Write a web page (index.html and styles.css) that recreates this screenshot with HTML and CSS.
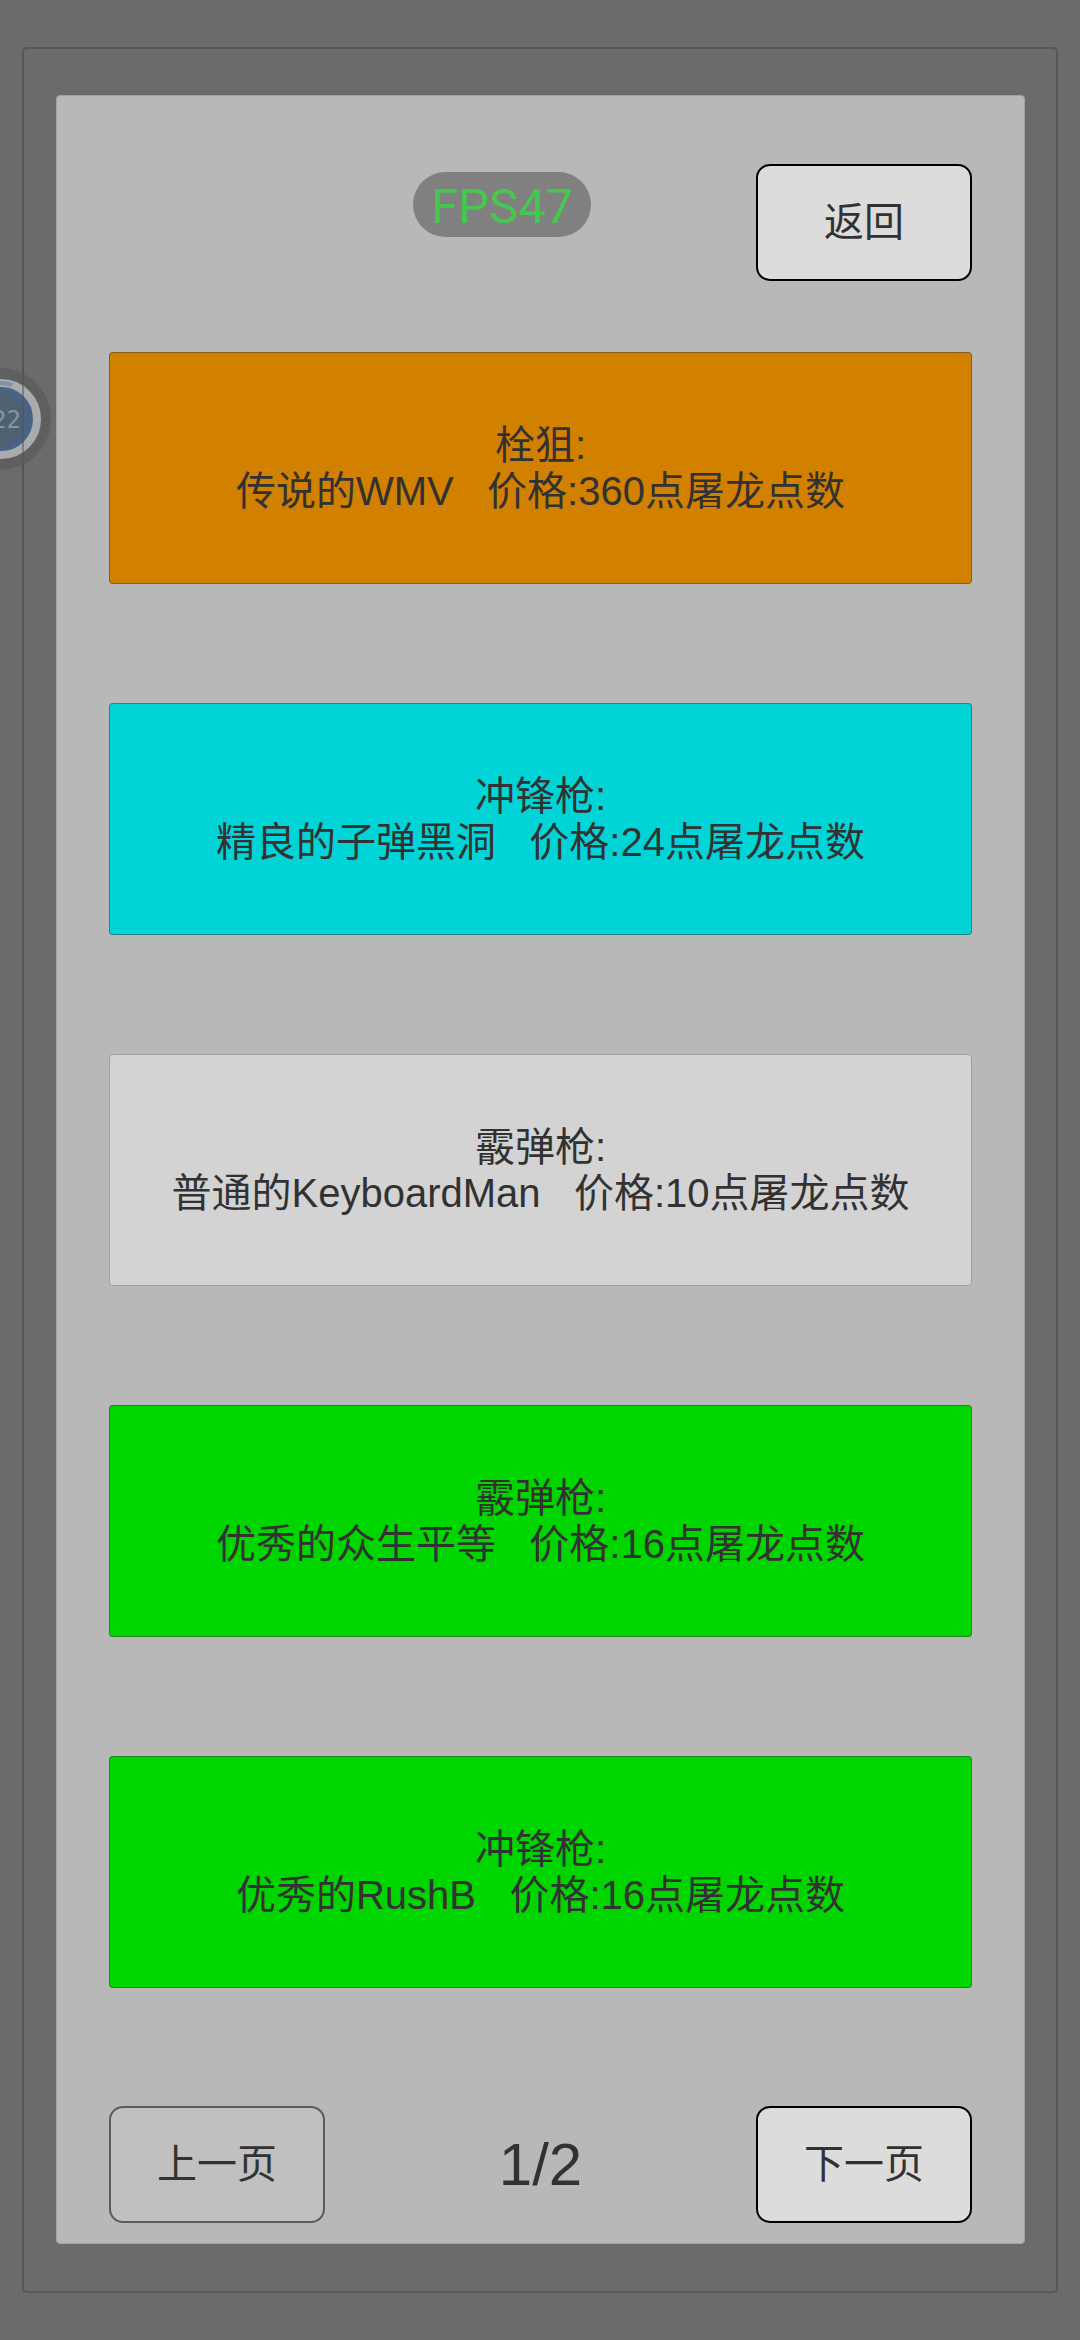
FILE: index.html
```html
<!DOCTYPE html>
<html lang="zh-CN">
<head>
<meta charset="utf-8">
<meta name="viewport" content="width=device-width, initial-scale=1">
<title>商店</title>
<link rel="stylesheet" href="styles.css">
</head>
<body>
<div class="frame">
  <main class="panel">
    <header class="top">
      <button class="btn" type="button">返回</button>
    </header>
    <div class="goods">
      <button class="card legend" type="button">栓狙:<br>传说的WMV&nbsp;&nbsp; 价格:360点屠龙点数</button>
      <button class="card fine" type="button">冲锋枪:<br>精良的子弹黑洞&nbsp;&nbsp; 价格:24点屠龙点数</button>
      <button class="card common" type="button">霰弹枪:<br>普通的KeyboardMan&nbsp;&nbsp; 价格:10点屠龙点数</button>
      <button class="card good" type="button">霰弹枪:<br>优秀的众生平等&nbsp;&nbsp; 价格:16点屠龙点数</button>
      <button class="card good" type="button">冲锋枪:<br>优秀的RushB&nbsp;&nbsp; 价格:16点屠龙点数</button>
    </div>
    <footer class="pager">
      <button class="btn" type="button" disabled>上一页</button>
      <span class="page">1/2</span>
      <button class="btn" type="button">下一页</button>
    </footer>
  </main>
</div>
<div class="fps">FPS47</div>
<div class="bubble">
  <svg width="52" height="104" viewBox="0 0 52 104" aria-hidden="true">
    <circle cx="0" cy="52" r="51" fill="#5f5f5f"/>
    <circle cx="1" cy="52" r="36" fill="#486383" stroke="#a9abad" stroke-width="8"/>
    <path d="M0 25h6l16 14v28l-16 14H0z" fill="#4f6070"/>
    <path d="M0 16a36 36 0 0 1 12 2" fill="none" stroke="#7f93a8" stroke-width="4"/>
    <path d="M23 0v104" stroke="#505050" stroke-opacity=".5" stroke-width="2"/>
  </svg>
  <span class="count">22</span>
</div>
</body>
</html>
```
FILE: styles.css
```css
* {
  box-sizing: border-box;
}

body {
  margin: 0;
  min-height: 100vh;
  padding: 47px 22px;
  background: #6b6b6b;
  color: #323232;
  font-family: "Liberation Sans", "Noto Sans CJK SC", sans-serif;
  font-size: 40px;
  line-height: 46px;
}

.frame {
  padding: 46px 31px 47px 32px;
  border: 2px solid #575757;
  border-radius: 5px;
}

.panel {
  padding: 68px 52px 20px;
  border: 1px solid #a3a3a3;
  border-radius: 4px;
  background: #b8b8b8;
}

.top {
  display: flex;
  justify-content: flex-end;
}

.btn {
  width: 216px;
  height: 117px;
  padding: 0 0 2px;
  border: 2px solid #000;
  border-radius: 14px;
  background: #dcdcdc;
  color: inherit;
  font: inherit;
}

.btn:disabled {
  border-color: #5c5c5c;
  background: #c0c0c0;
}

.goods {
  display: grid;
  gap: 119px;
  padding: 71px 0 118px;
}

.card {
  width: 100%;
  height: 232px;
  padding: 0;
  border: 1px solid rgb(60 60 60 / 50%);
  border-radius: 4px;
  color: inherit;
  font: inherit;
}

.legend {
  background: #d28000;
}

.fine {
  background: #00d4d6;
}

.common {
  border-color: #a0a0a0;
  background: #d3d3d3;
}

.good {
  background: #00d500;
}

.pager {
  display: flex;
  align-items: center;
  justify-content: space-between;
}

.page {
  font-size: 60px;
}

/* Overlays floating above the game screen */
.fps {
  position: absolute;
  top: 172px;
  left: 413px;
  width: 178px;
  padding-top: 5px;
  border-radius: 33px;
  background: #808080;
  color: #46c850;
  font-family: Roboto, sans-serif;
  font-size: 49px;
  line-height: 60px;
  text-align: center;
}

.bubble {
  position: absolute;
  top: 367px;
  left: 0;
  width: 52px;
  height: 104px;
  overflow: hidden;
}

.bubble svg {
  display: block;
}

.count {
  position: absolute;
  top: 40px;
  right: 31px;
  color: #8296a9;
  font-family: "DejaVu Sans Mono", monospace;
  font-size: 24px;
  line-height: 26px;
}
```
